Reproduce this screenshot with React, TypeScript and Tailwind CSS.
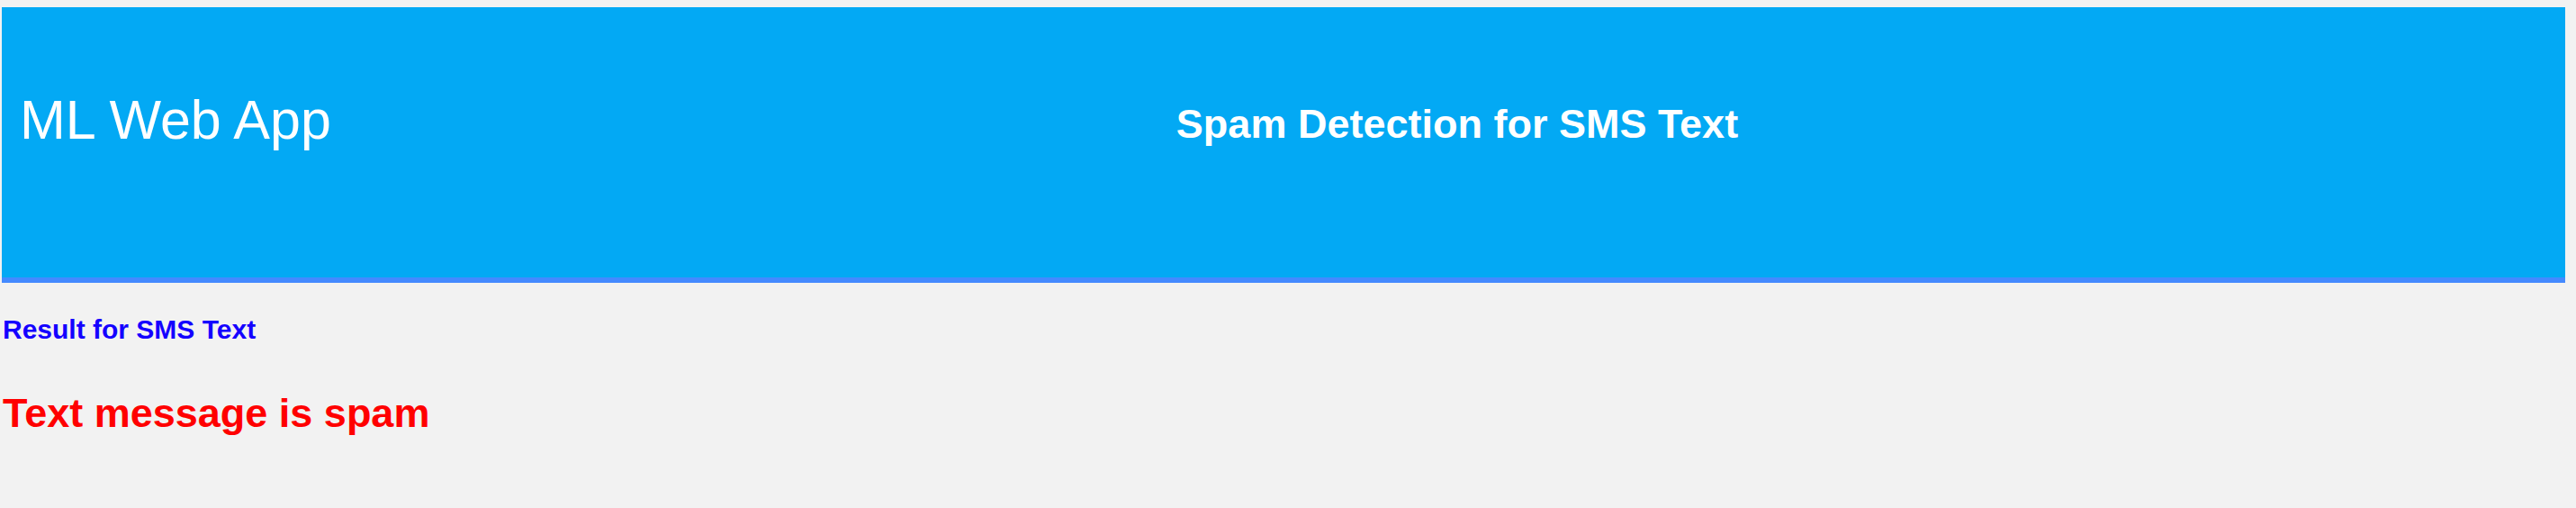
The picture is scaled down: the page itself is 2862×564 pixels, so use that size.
const App = () => {
  return (
    <div className="min-h-[564px] bg-[#f2f2f2] pt-[8px] font-['Liberation_Sans',Arial,sans-serif]">
      {/* Header */}
      <header className="ml-[2px] flex h-[306px] w-[2848px] border-b-[6px] border-[#448aff] bg-[#03a9f4] text-white">
        <div className="w-[386px] shrink-0 pl-[20px] pt-[95px]">
          <div className="text-[61px] leading-none">ML Web App</div>
        </div>
        <div className="flex-1 pt-[107px] text-center">
          <h1 className="text-[45px] font-bold leading-none">Spam Detection for SMS Text</h1>
        </div>
      </header>

      {/* Result */}
      <div className="pl-[3px] pt-[37px]">
        <h2 className="text-[30px] font-bold leading-none text-[#1400ff]">Result for SMS Text</h2>
        <h1 className="mt-[55px] text-[45px] font-bold leading-none text-[#ff0000]">Text message is spam</h1>
      </div>
    </div>
  );
};

export default App;
